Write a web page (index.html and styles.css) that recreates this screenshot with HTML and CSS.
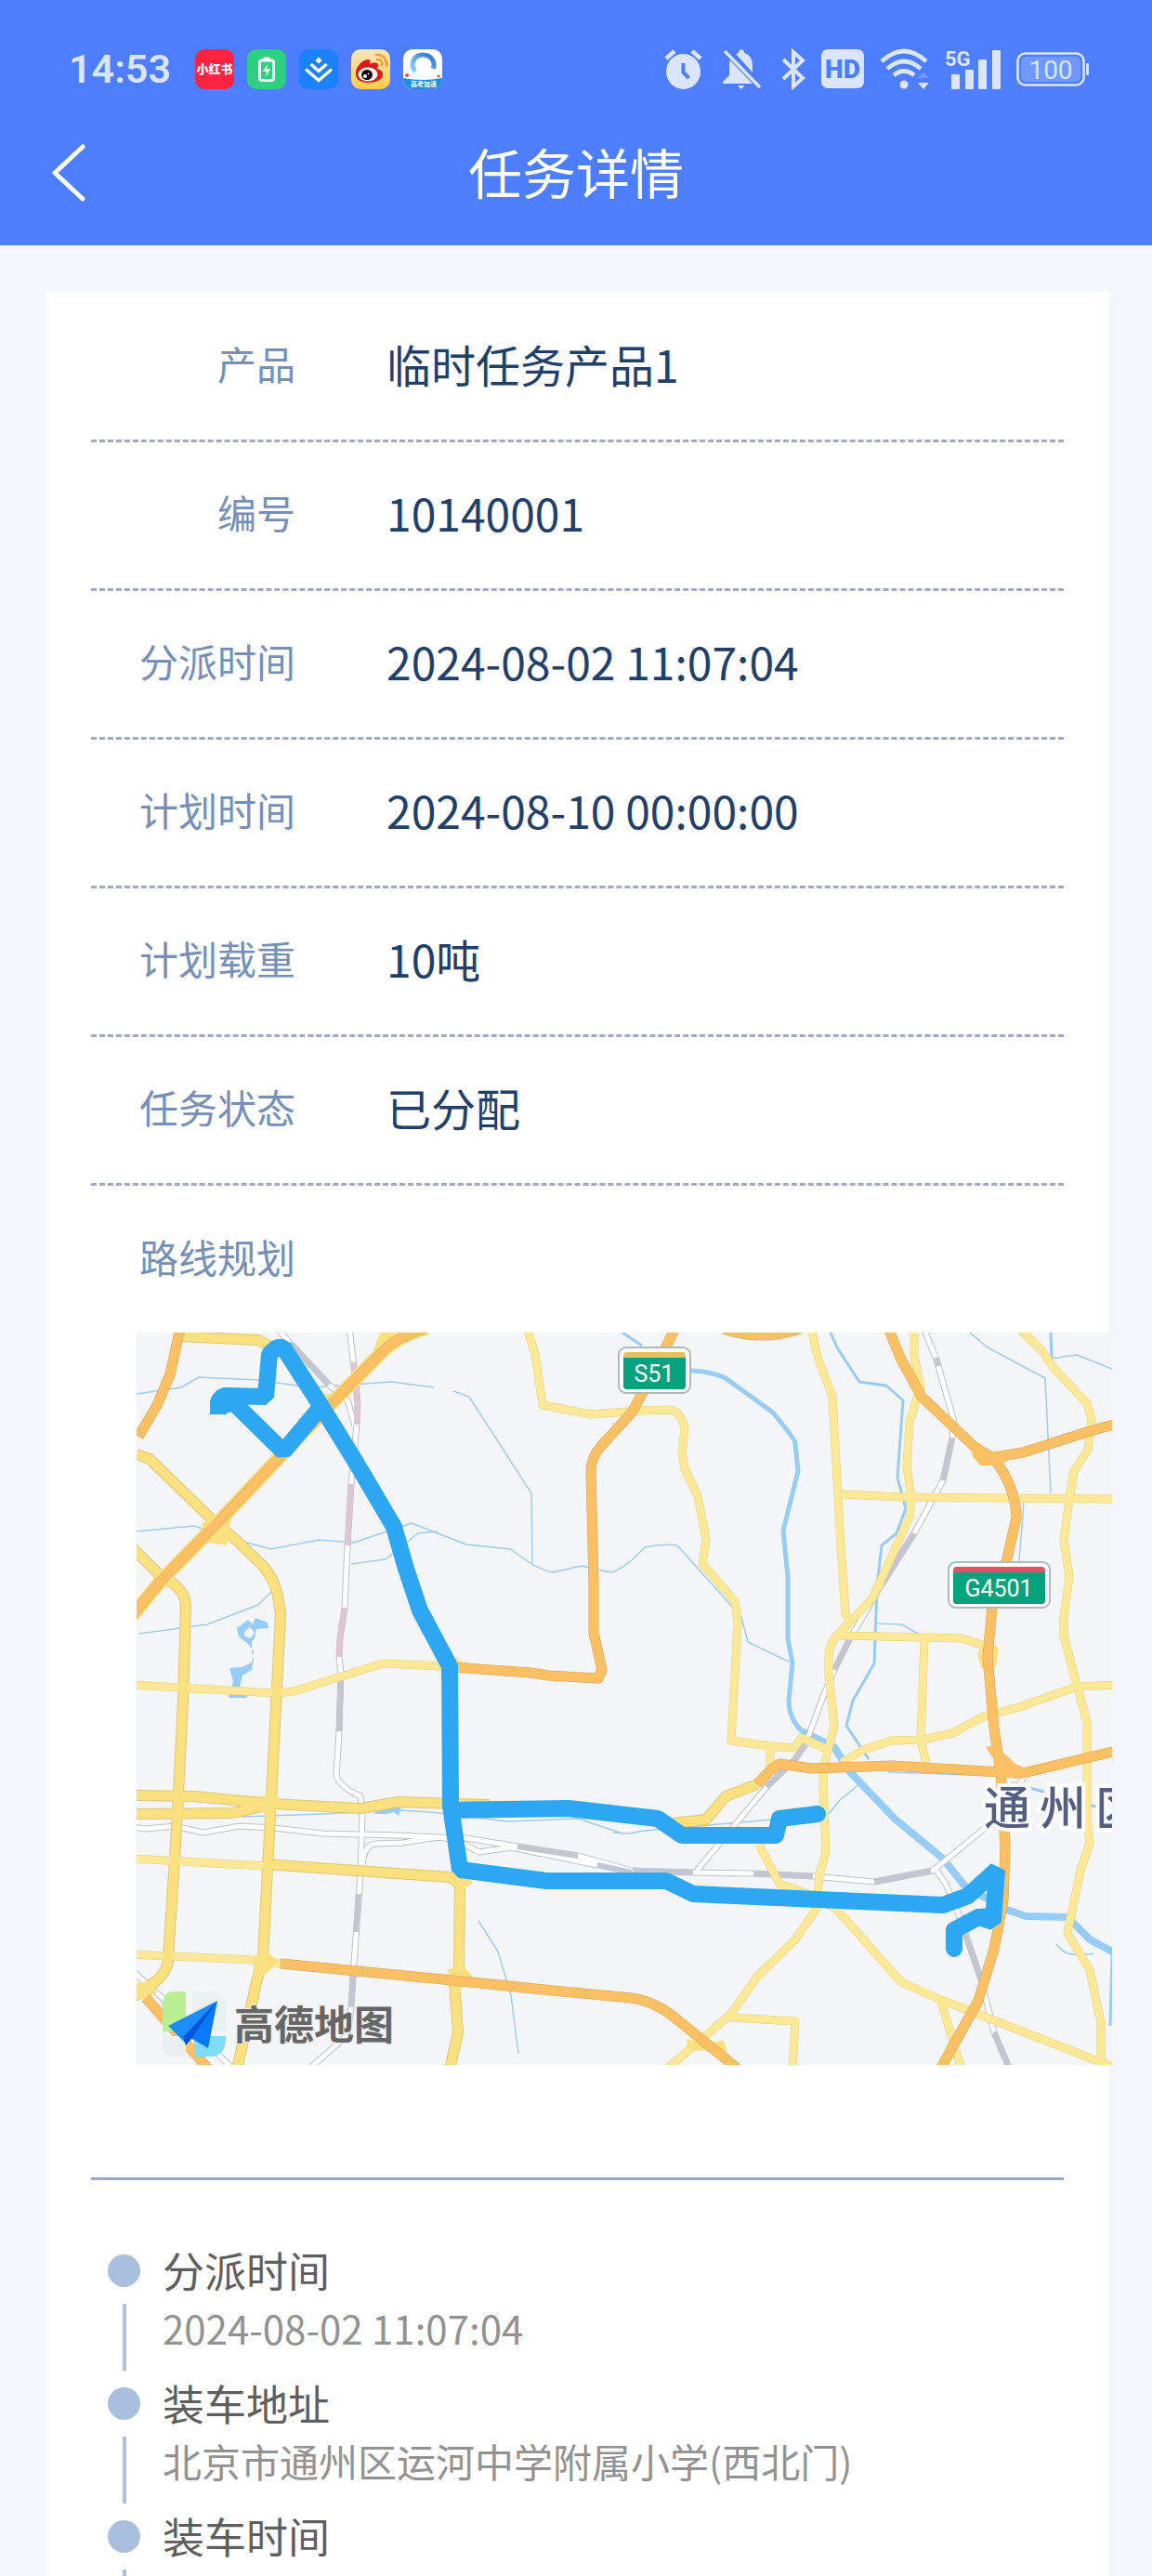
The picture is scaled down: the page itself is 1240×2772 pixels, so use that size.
FILE: index.html
```html
<!DOCTYPE html>
<html lang="zh-CN">
<head>
    <meta charset="UTF-8">
    <meta name="viewport" content="width=device-width, initial-scale=1.0">
    <title>任务详情</title>
    <link rel="stylesheet" href="styles.css">
</head>
<body>
    <header class="header">
        <div class="status-bar">
            <span class="clock">14:53</span>
            <div class="app-icons">
                <svg width="42" height="43" viewBox="0 0 42 43">
                    <rect width="42" height="43" rx="10" fill="#fe2441"/>
                    <text x="21" y="26" text-anchor="middle" class="red-text">小红书</text>
                </svg>
                <svg width="42" height="43" viewBox="0 0 42 43">
                    <rect width="42" height="43" rx="10" fill="#2dcf80"/>
                    <rect x="13.500" y="12" width="15" height="21.500" rx="2.500" fill="none" stroke="#fff" stroke-width="3"/>
                    <rect x="17.500" y="8.500" width="7" height="3" rx="1" fill="#fff"/>
                    <path d="M22 16l-5 8h4l-1 6 5-9h-4z" fill="#fff"/>
                </svg>
                <svg width="42" height="43" viewBox="0 0 42 43">
                    <rect width="42" height="43" rx="10" fill="#1c80ff"/>
                    <path d="M21 8.500l3.600 3.500-3.600 3.500-3.600-3.500z" fill="#fff"/>
                    <path d="M12.500 16l8.500 7.500 8.500-7.500M7 21.500l14 12 14-12" fill="none" stroke="#fff" stroke-width="3.400"/>
                </svg>
                <svg width="42" height="43" viewBox="0 0 42 43">
                    <defs>
                        <linearGradient id="gold" x1="0" y1="0" x2="0" y2="1">
                            <stop offset="0" stop-color="#f6e6c0"/>
                            <stop offset="1" stop-color="#ffcc45"/>
                        </linearGradient>
                    </defs>
                    <rect width="42" height="43" rx="10" fill="url(#gold)"/>
                    <path d="M5 27C4 19 13 10 19 11c2 1 2 3 1 5 4-2 9-2 9 1 0 2-1 3-1 4 4 1 6 3 6 6 0 6-8 9-16 9S5 32 5 27z" fill="#df1a1d"/>
                    <ellipse cx="18" cy="27" rx="10.500" ry="7.500" fill="#fff"/>
                    <ellipse cx="17" cy="27.500" rx="6" ry="5.500" fill="#0b0708"/>
                    <circle cx="15" cy="29" r="2" fill="#fff"/>
                    <circle cx="18.500" cy="26.500" r="0.900" fill="#fff"/>
                    <path d="M27 6c7-1 12 5 11 12M28 11c4 0 6 3 5 6" fill="none" stroke="#f79a2a" stroke-width="2.400" stroke-linecap="round"/>
                </svg>
                <svg width="42" height="43" viewBox="0 0 42 43">
                    <defs>
                        <linearGradient id="ring" x1="0" y1="1" x2="1" y2="0">
                            <stop offset="0" stop-color="#8bd4fb"/>
                            <stop offset="1" stop-color="#2f74d6"/>
                        </linearGradient>
                        <clipPath id="tile"><rect width="42" height="43" rx="10"/></clipPath>
                    </defs>
                    <g clip-path="url(#tile)">
                        <rect width="42" height="43" fill="#fff"/>
                        <path d="M13 24c-6-7-2-18 8-18s14 9 11 15" fill="none" stroke="url(#ring)" stroke-width="5"/>
                        <path d="M0 31q21 4 42 0v12H0z" fill="#1e8ee0"/>
                        <circle cx="4" cy="28" r="2" fill="#e3513e"/>
                        <circle cx="38" cy="29" r="1.600" fill="#e3513e"/>
                        <text x="22" y="40" text-anchor="middle" class="tiny-text">高考加速</text>
                    </g>
                </svg>
            </div>
            <div class="system-icons">
                <svg class="ico-alarm" width="41" height="43" viewBox="0 0 41 43">
                    <ellipse cx="20.500" cy="24" rx="18.500" ry="19" fill="#dbe5ff"/>
                    <path d="M2 10l9-8M39 10l-9-8" stroke="#dbe5ff" stroke-width="4.500"/>
                    <path d="M20.500 15v10l6 6" fill="none" stroke="#4d7eff" stroke-width="4"/>
                </svg>
                <svg class="ico-bell" width="41" height="43" viewBox="0 0 41 43">
                    <path d="M7 18v10L0 35v2h32L8 12c-1 2-1 4-1 6z" fill="#dbe5ff"/>
                    <path d="M14 5l3-1c0-5 6-5 6 0 7 2 9 8 9 14v7z" fill="#dbe5ff"/>
                    <path d="M16 39h7q-3 7-7 0z" fill="#dbe5ff"/>
                    <path d="M2 2l38 39" stroke="#dbe5ff" stroke-width="3.400"/>
                </svg>
                <svg class="ico-bt" width="26" height="43" viewBox="0 0 26 43">
                    <path d="M2 11l21 20-10 9V3l10 9L2 32" fill="none" stroke="#dbe5ff" stroke-width="4"/>
                </svg>
                <svg class="ico-hd" width="46" height="42" viewBox="0 0 46 42">
                    <rect width="46" height="42" rx="7" fill="#dbe5ff"/>
                    <text x="23" y="31" text-anchor="middle" class="hd-text">HD</text>
                </svg>
                <svg class="ico-wifi" width="53" height="43" viewBox="0 0 53 43">
                    <path d="M2 13q24-22 48 0M8 21q18-16 36 0M15 28q11-9 22 0" fill="none" stroke="#dbe5ff" stroke-width="4.600"/>
                    <circle cx="26" cy="38" r="4.500" fill="#dbe5ff"/>
                    <path d="M41 36h12l-6 7z" fill="#dbe5ff"/>
                    <path d="M41 31h12l-6-6z" fill="#6f97ff"/>
                </svg>
                <svg class="ico-signal" width="60" height="43" viewBox="0 0 60 43">
                    <text x="0" y="18" class="net-text">5G</text>
                    <rect x="7" y="27" width="9" height="16" rx="1" fill="#dbe5ff"/>
                    <rect x="22" y="22" width="9" height="21" rx="1" fill="#dbe5ff"/>
                    <rect x="36" y="11" width="9" height="32" rx="1" fill="#dbe5ff"/>
                    <rect x="51" y="1" width="9" height="42" rx="1" fill="#dbe5ff"/>
                </svg>
                <svg class="ico-battery" width="78" height="37" viewBox="0 0 78 37">
                    <rect x="1.500" y="1.500" width="71" height="34" rx="8" fill="none" stroke="#dbe5ff" stroke-width="2.600"/>
                    <rect x="5" y="5" width="64" height="27" rx="5" fill="#7098ff"/>
                    <rect x="75" y="12" width="3" height="13" rx="1" fill="#dbe5ff"/>
                    <text x="37" y="29" text-anchor="middle" class="battery-text">100</text>
                </svg>
            </div>
        </div>
        <div class="nav-bar">
            <button class="back" type="button" aria-label="返回">
                <svg width="36" height="62" viewBox="0 0 36 62">
                    <path d="M33 3L3 31l30 28" fill="none" stroke="#fff" stroke-width="5" stroke-linecap="round" stroke-linejoin="round"/>
                </svg>
            </button>
            <h1>任务详情</h1>
        </div>
    </header>

    <main class="content">
        <div class="card">
            <dl class="info">
                <div class="row"><dt>产品</dt><dd>临时任务产品1</dd></div>
                <div class="row"><dt>编号</dt><dd>10140001</dd></div>
                <div class="row"><dt>分派时间</dt><dd>2024-08-02 11:07:04</dd></div>
                <div class="row"><dt>计划时间</dt><dd>2024-08-10 00:00:00</dd></div>
                <div class="row"><dt>计划载重</dt><dd>10吨</dd></div>
                <div class="row"><dt>任务状态</dt><dd>已分配</dd></div>
                <div class="row"><dt>路线规划</dt></div>
            </dl>

            <svg class="map" viewBox="0 0 1050 788" role="img" aria-label="路线规划">
                <defs>
                    <!-- every road is drawn twice: dark edge first, then fill -->
                    <g id="minor">
                        <path d="M420 -5L429 23 437 78 489 88 541 84 575 83Q586 85 590 103L587 129 590 146 604 176 613 223 609 249 644 289 647 313 640 439 682 445 708 447 716 436 744 449M682 445V466"/>
                        <path d="M726 -5L733 26 749 69 758 229 763 303 770 313M837 -5V26L844 59 832 96 829 146 833 169V196L809 249 792 286 754 326Q745 335 745 349V366L751 423 740 466 739 486 742 559 735 583 733 606"/>
                        <path d="M757 174L826 177 1055 179M757 326L888 329 916 338M848 329L844 439 850 463"/>
                        <path d="M950 -5L974 19 988 39 1023 76 1028 93 1024 126 1009 149 1005 173 998 223 1004 263 998 306V326L1012 379 1023 419V526L1026 549 1016 579 1002 646 1026 686 1038 743V793"/>
                        <path d="M759 463L782 449 813 439 847 438 878 431 912 413 950 403 1012 381 1055 379"/>
                        <path d="M670 551L692 593 733 608 754 621 823 699 861 716 895 729 1055 792M733 618L709 653 668 693 640 733 570 793M640 737L709 741 706 793M866 720L888 793"/>
                        <path d="M-5 379L148 388 169 386 265 356 330 359M-5 566L138 574M-5 669L124 675 155 679"/>
                    </g>
                    <g id="major">
                        <path d="M45 4L131 8 150 18M0 131L14 136 83 203 107 223 138 253Q151 270 153 290L155 303 145 500 136 673 129 699 108 793"/>
                        <path d="M-5 231L27 263 38 269Q53 280 53 295L50 396 45 496 41 566 34 673Q34 690 14 703L-5 716"/>
                        <path d="M-5 498L62 499 145 507 241 512 282 505 380 508M-5 518L103 517 145 508M138 572L337 586 348 593 347 686 342 700 346 753 337 793"/>
                        <path d="M576 528L613 524 634 499 668 486"/>
                    </g>
                    <g id="highway">
                        <path d="M47 -5L36 45 22 78 2 112M-5 305L27 266 86 206 155 133 217 69 262 23Q278 5 312 -5"/>
                        <path d="M341 360L423 366 444 369 497 372 501 363 492 323V269L489 149Q489 135 500 122L533 86Q545 65 580 -5"/>
                        <path d="M632 -4Q672 10 714 -4M809 -5L823 29 845 69 902 123 923 136Q946 165 947 199L937 243 921 296 916 349 923 426 930 473 935 553 933 610 923 663 906 719 878 769 864 795"/>
                        <path d="M910 136L954 129 1026 106 1055 98M668 486L682 471 692 464 727 469 813 466 930 473 954 474 1055 450"/>
                        <path d="M155 679L330 696 448 708 533 716Q560 720 584 741L648 793M10 716L78 793"/>
                    </g>
                    <g id="rail">
                        <path d="M229 -5L234 36 238 76 237 99 231 163 227 229 224 296 219 329 218 349 220 366 218 429 215 476Q217 488 241 499L243 519 241 583 234 679 231 726 227 756 186 792"/>
                        <path d="M151 -5L165 11 207 56 227 73 235 100M847 -5L861 29 880 96 878 113 868 159 837 216 802 271 768 329 751 363 740 389 720 443 709 459 678 489 603 579"/>
                        <path d="M-5 532L10 534 41 531 72 538 110 531 148 533 200 539 282 541 324 543 355 544 410 553 475 563 533 579 599 581 664 582 728 585 794 591 857 579 912 534 956 478"/>
                        <path d="M243 573Q245 550 258 550L286 549 324 543 345 546 368 559 403 554 496 573M861 579L871 593 885 626 909 696 923 753 940 793M-5 686L31 719 104 793"/>
                    </g>
                </defs>
                <rect width="1050" height="788" fill="#f3f5f7"/>

                <g class="stream">
                    <path d="M0 66L48 59 67 48 131 51 186 59 275 53 320 59M341 63L358 69 425 173 426 248"/>
                    <path d="M0 214L62 208 100 221 145 233 196 223 234 226 296 205 355 228 403 233Q430 255 448 258L479 251 510 258Q525 255 547 231 565 227 582 229L651 306 658 333 702 354"/>
                    <path d="M231 249L268 244 303 216 324 214M3 324L76 314 131 293 145 279M897 0L916 16 978 49 984 173M985 28L1012 24 1050 39"/>
                    <path d="M795 313L823 314 845 326M955 183L950 246M744 519L757 503 778 486M513 538L530 539 547 536 685 524M113 521L200 518 282 514 317 516 399 526 475 523 523 539"/>
                    <path d="M368 633L389 666 403 713 411 776M809 473L926 477M990 658Q1000 674 1030 668"/>
                </g>
                <g class="brook">
                    <path d="M523 0L544 14M747 0L754 16 778 53 807 57 825 73 819 156 828 189 818 216 802 229 797 273 794 356 771 396 764 423 788 459M984 0L985 28M1050 670L1048 746M942 485L977 494M1023 508L1034 510"/>
                </g>
                <path class="river" d="M597 41Q620 42 634 49L685 86Q709 115 709 119L712 149 696 213 701 263V329L706 356 702 396Q702 415 716 429"/>
                <path class="river wide" d="M716 429L751 446 768 473 816 523 868 566 892 596 937 621 957 628 1002 629 1026 653 1052 667"/>
                <path class="pond" d="M108 318l12-9 5 5 3-7 13 5 1 6-13 1-2 10-3 3v12l2 8-2 11-10 6-3 12 6 4 2 8h-20l5-18-4-14 13-1 11-5 2-12-5-7-11-9zM116 322l6-5 5 6-4 6-7-2z" fill-rule="evenodd"/>
                <path class="pond" d="M255 518l10-7 20-1-3 10-5-4-8 2z"/>

                <use href="#rail" class="rail-edge"/>
                <use href="#rail" class="rail-fill"/>
                <g class="rail-gray">
                    <path d="M165 11L207 56M220 368L218 429M239 604L236 645M233 690L231 726M861 27L863 36M878 113L868 159M837 216L802 271M768 329L751 363M720 443L709 459 678 489"/>
                    <path d="M410 553L475 563M496 573L533 581M534 579L599 581M664 582L728 585M794 591L855 579M891 645L909 696M923 753L940 793"/>
                </g>
                <path class="rail-pink" d="M233 32L238 76 237 99M231 163L227 229M224 296L219 329 218 349"/>

                <use href="#minor" class="minor-edge"/>
                <use href="#major" class="major-edge"/>
                <use href="#minor" class="minor-fill"/>
                <use href="#major" class="major-fill"/>
                <path class="shoulder" d="M-5 305L27 266 86 206 155 133 217 69 262 23Q278 5 312 -5"/>
                <g class="junction">
                    <path d="M86 195l18-6-4 22-3 18-20-3-7-20zM22 255l22-2-6 20-16 2zM198 67l16-2-4 22zM262 0h36l-18 18-28 10zM334 586l14-10 14 16-14 10zM334 686l16-8 12 16-16 14zM134 500l12-8 12 14-14 14-14-8zM126 672l12-8 14 12-12 14-14-4z"/>
                    <path d="M905 345l10-14 13 8-3 20-16 2zM592 760l22 4 18-2 4 12-42-2zM324 356l18-8 20 16-18 2zM0 700l14-2 8 12-14 8-8-2z"/>
                </g>
                <use href="#highway" class="highway-edge"/>
                <use href="#highway" class="highway-fill"/>
                <path d="M898 122l24 12 28-5-20 14-22 0-8-10zM914 446l10-2 22 20 14 6-10 10-26-2-2-20z" fill="#fac164"/>

                <g class="route">
                    <path d="M88 88V74L93 68 139 69 143 23 151 16H158L198 78 234 136 277 209 290 254 305 299 337 359 338 509 348 578 441 590 570 590 599 604 868 616 895 606 926 578 922 634 906 629"/>
                    <path d="M92 78L105 76 158 128 200 78"/>
                    <path d="M334 514L465 512 561 523 587 541H689"/>
                </g>
                <g class="route round">
                    <path d="M688 541L692 523 733 518M922 628L906 629 880 643V663"/>
                </g>

                <rect x="519" y="16" width="77" height="49" rx="8" fill="#fff" stroke="#b3b8bd" stroke-width="2"/>
                <rect x="524" y="21" width="67" height="40" rx="4" fill="#e3c261"/>
                <path d="M524 27h67v30q0 4-4 4h-59q-4 0-4-4z" fill="#04a37e"/>
                <text x="557" y="53" text-anchor="middle" class="shield-text">S51</text>
                <rect x="874" y="247" width="109" height="49" rx="8" fill="#fff" stroke="#b3b8bd" stroke-width="2"/>
                <rect x="879" y="252" width="99" height="40" rx="4" fill="#ea4f66"/>
                <path d="M879 258h99v30q0 4-4 4h-91q-4 0-4-4z" fill="#04a37e"/>
                <text x="928" y="284" text-anchor="middle" class="shield-text">G4501</text>
                <text x="912 972 1032" y="530" class="place">通州区</text>

                <path d="M28 724q0-15 13-15h12v43H28z" fill="#b9ee93"/>
                <path d="M60 709h21q14 0 15 15v28H60z" fill="#e9f1f3"/>
                <path d="M28 757h25v22H41q-13 0-13-13z" fill="#e9eef2"/>
                <path d="M62 757h34q0 22-16 22H62z" fill="#80dcfd"/>
                <path d="M34 746l53-27-33 47z" fill="#1a8dff"/>
                <path d="M87 719L77 770 58 759z" fill="#0a78fa"/>
                <path d="M87 719L50 758l3 9 6-7z" fill="#0056d8"/>
                <text x="105" y="761" class="brand">高德地图</text>
            </svg>

            <ul class="timeline">
                <li>
                    <h2>分派时间</h2>
                    <p>2024-08-02 11:07:04</p>
                </li>
                <li>
                    <h2>装车地址</h2>
                    <p>北京市通州区运河中学附属小学(西北门)</p>
                </li>
                <li>
                    <h2>装车时间</h2>
                    <p></p>
                </li>
            </ul>
        </div>
    </main>
</body>
</html>
```

FILE: styles.css
```css
* {
    box-sizing: border-box;
    margin: 0;
    padding: 0;
}

body {
    display: flex;
    flex-direction: column;
    height: 100vh;
    font-family: "Noto Sans CJK SC", "Noto Sans", sans-serif;
    background-color: #f3f6ff;
}

/* header */
.header {
    flex: none;
    padding-top: 48px;
    background-color: #4d7eff;
    color: #fff;
}

.status-bar {
    display: flex;
    align-items: center;
    height: 52px;
    padding: 0 68px 0 74px;
}

.status-bar svg {
    overflow: visible;
}

.clock {
    font: 600 43px/52px Roboto, sans-serif;
    color: #dbe5ff;
}

.app-icons {
    display: flex;
    gap: 14px;
    margin-left: 26px;
}

.system-icons {
    display: flex;
    align-items: center;
    gap: 17px;
    margin-left: auto;
}

.ico-alarm,
.ico-bell {
    margin-right: 5px;
}

.red-text {
    font: 900 13px "Noto Sans CJK SC", sans-serif;
    fill: #fff;
}

.tiny-text {
    font: 700 7px "Noto Sans CJK SC", sans-serif;
    fill: #fff;
}

.hd-text {
    font: 900 28px Roboto, sans-serif;
    fill: #4d7eff;
}

.net-text {
    font: 700 22px Roboto, sans-serif;
    fill: #dbe5ff;
}

.battery-text {
    font: 400 28px Roboto, sans-serif;
    fill: #dbe5ff;
}

.nav-bar {
    display: grid;
    grid-template-columns: 124px 1fr 124px;
    align-items: center;
    height: 164px;
    padding-top: 8px;
}

.back {
    display: flex;
    margin-left: 56px;
    border: none;
    background: none;
    cursor: pointer;
}

.nav-bar h1 {
    padding-bottom: 4px;
    font-size: 58px;
    font-weight: 400;
    line-height: 80px;
    text-align: center;
}

/* content */
.content {
    flex: 1;
    padding: 50px 46px 0 49px;
    overflow-y: auto;
    scrollbar-width: none;
}

.card {
    background-color: #fff;
}

.info {
    padding: 2px 49px 0;
}

.row {
    display: flex;
    align-items: center;
    gap: 98px;
    height: 160px;
    padding-bottom: 8px;
    border-bottom: 3px dashed #a5a9c4;
}

.row:last-child {
    height: 158px;
    border-bottom: none;
}

.row dt {
    width: 220px;
    font-size: 42px;
    text-align: right;
    color: #7590b8;
}

.row dd {
    font-size: 48px;
    color: #213f6b;
}

/* map, runs a little past the card edge */
.map {
    display: block;
    width: calc(100% - 95px);
    margin-left: 98px;
}

.map path {
    stroke-linejoin: round;
}

.map use,
.stream,
.brook,
.river,
.shoulder,
.rail-gray,
.rail-pink,
.route {
    fill: none;
}

.stream {
    stroke: #9fcdf2;
    stroke-width: 1.5;
}

.brook {
    stroke: #9acbf5;
    stroke-width: 3;
}

.river {
    stroke: #97ccf6;
    stroke-width: 5;
}

.river.wide {
    stroke-width: 8;
}

.pond {
    fill: #97ccf8;
}

.rail-edge {
    stroke: #bfc1c8;
    stroke-width: 7;
}

.rail-fill {
    stroke: #fff;
    stroke-width: 5;
}

.rail-gray {
    stroke: #c3c5d1;
    stroke-width: 6;
}

.rail-pink {
    stroke: #dfc5cf;
    stroke-width: 6;
}

.minor-edge {
    stroke: #e6d07c;
    stroke-width: 9;
}

.minor-fill {
    stroke: #fce897;
    stroke-width: 8;
}

.major-edge {
    stroke: #dfc777;
    stroke-width: 12;
}

.major-fill {
    stroke: #fae07f;
    stroke-width: 10;
}

.shoulder {
    stroke: #f9dc7c;
    stroke-width: 15;
}

.junction {
    fill: #fae07f;
}

.highway-edge {
    stroke: #dba14f;
    stroke-width: 11;
}

.highway-fill {
    stroke: #fbc064;
    stroke-width: 10;
}

.map .route path {
    stroke: #2ea7f3;
    stroke-width: 18;
    stroke-linejoin: bevel;
}

.map .round path {
    stroke-linecap: round;
    stroke-linejoin: round;
}

.shield-text {
    font: 400 25px Roboto, sans-serif;
    fill: #fff;
}

.place {
    font-size: 50px;
    font-weight: 500;
    fill: #535e80;
    stroke: #fff;
    stroke-width: 8;
    paint-order: stroke;
}

.brand {
    font-size: 43px;
    font-weight: 700;
    fill: #666;
    stroke: #eceef0;
    stroke-width: 2;
    paint-order: stroke;
}

/* timeline */
.timeline {
    margin: 121px 49px 0;
    padding: 66px 0 0 18px;
    border-top: 3px solid #9ba9c4;
    list-style: none;
}

.timeline li {
    display: grid;
    grid-template-columns: 35px 1fr;
    grid-template-rows: 62px 62px;
    column-gap: 24px;
    padding-bottom: 19px;
}

.timeline li::before {
    content: "";
    width: 35px;
    height: 35px;
    margin-top: 14px;
    border-radius: 50%;
    background-color: #a9bfde;
}

.timeline li::after {
    content: "";
    grid-column: 1;
    grid-row: 2;
    justify-self: center;
    width: 4px;
    height: 72px;
    margin-top: 5px;
    background-color: #adc2d9;
}

.timeline h2 {
    font-size: 45px;
    font-weight: 400;
    line-height: 62px;
    color: #5e5e5e;
}

.timeline p {
    grid-column: 2;
    font-size: 42px;
    line-height: 62px;
    color: #929292;
}
```
